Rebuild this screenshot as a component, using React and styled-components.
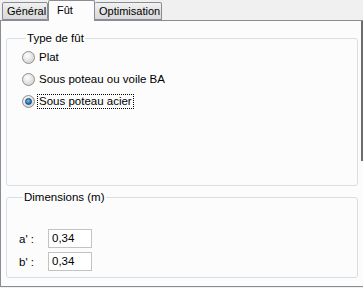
import styled, { createGlobalStyle } from "styled-components";

const GlobalStyle = createGlobalStyle`
  html, body { margin: 0; padding: 0; background: #f0f0f0; }
  body { font-family: "Liberation Sans", Arial, sans-serif; font-size: 11.5px; color: #000; }
`

const Window = styled.div`
  width: 363px;
  height: 288px;
  background: #f0f0f0;
  display: flex;
  flex-direction: column;
  position: relative;
  overflow: hidden;
  font-family: "Liberation Sans", Arial, sans-serif;
  font-size: 11.5px;
`

const TabStrip = styled.div`
  display: flex;
  align-items: flex-end;
  height: 20px;
  padding-left: 2px;
  position: relative;
  z-index: 1;
  font-size: 11px;
`

const Tab = styled.div`
  box-sizing: border-box;
  height: ${p => (p.$active ? "21px" : "18px")};
  margin-bottom: ${p => (p.$active ? "-1px" : "0")};
  padding-top: ${p => (p.$active ? "2px" : "1px")};
  padding-left: ${p => (p.$active ? "8px" : "4px")};
  width: ${p => p.$w}px;
  border: 1px solid #898c95;
  border-bottom: ${p => (p.$active ? "none" : "1px solid #898c95")};
  border-left: ${p => (p.$noLeft ? "none" : "1px solid #898c95")};
  border-radius: 2px 2px 0 0;
  background: ${p => (p.$active ? "#fcfcfc" : "linear-gradient(#f2f2f2, #e3e3e3 50%, #d9d9d9)")};
  line-height: 14px;
  white-space: nowrap;
`

const Panel = styled.div`
  flex: 1;
  box-sizing: border-box;
  background: #fcfcfc;
  border: 1px solid #898c95;
  border-right: none;
  padding: 10px 0 0 5px;
  display: flex;
  flex-direction: column;
  gap: 4px;
  margin-bottom: 1px;
`

const Group = styled.fieldset`
  box-sizing: border-box;
  margin: 0;
  width: 352px;
  height: ${p => p.$h}px;
  border: 1px solid #d5dfe5;
  border-radius: 3px;
  padding: 1px 0 0 ${p => p.$pl}px;
`

const Legend = styled.legend`
  padding: 0 1px;
  margin-left: 4px;
  line-height: 14px;
`

const RadioRow = styled.label`
  display: flex;
  align-items: center;
  height: 22px;
  gap: 3px;
`

const RadioDot = styled.span`
  box-sizing: border-box;
  width: 13px;
  height: 13px;
  border-radius: 50%;
  border: 1px solid #8e8f8f;
  background: radial-gradient(circle at 40% 35%, #ffffff 0%, #e6e6e6 45%, #c8c8c8 100%);
  display: flex;
  align-items: center;
  justify-content: center;
  &::after {
    content: "";
    display: ${p => (p.$checked ? "block" : "none")};
    width: 5px;
    height: 5px;
    border-radius: 50%;
    background: radial-gradient(circle at 40% 35%, #6fc3f5, #1b6fb5 70%, #0d3f75);
    border: 1px solid #1a3f6a;
  }
`

const RadioText = styled.span`
  padding: 0 1px;
  line-height: 13px;
  outline: ${p => (p.$focus ? "1px dotted #000" : "none")};
`

const Fields = styled.div`
  display: flex;
  flex-direction: column;
  gap: 4px;
  padding-top: 24px;
`

const FieldRow = styled.div`
  display: flex;
  align-items: center;
`

const FieldLabel = styled.span`
  width: 29px;
`

const Input = styled.div`
  box-sizing: border-box;
  width: 44px;
  height: 19px;
  border: 1px solid #c3c3c3;
  background: #fff;
  padding: 2px 0 0 3px;
  line-height: 13px;
`

const ScrollEdge = styled.div`
  position: absolute;
  right: 0;
  top: 21px;
  width: 2px;
  height: 140px;
  background: #6d6d6d;
`

const App = () => {
  const options = ["Plat", "Sous poteau ou voile BA", "Sous poteau acier"]
  const selected = 2
  return (
    <>
      <GlobalStyle />
      <Window>
        <TabStrip>
          <Tab $w={46}>Général</Tab>
          <Tab $w={47} $active>Fût</Tab>
          <Tab $w={67} $noLeft>Optimisation</Tab>
        </TabStrip>
        <Panel>
          <Group $h={155} $pl={15}>
            <Legend>Type de fût</Legend>
            {options.map((o, i) => (
              <RadioRow key={o}>
                <RadioDot $checked={i === selected} />
                <RadioText $focus={i === selected}>{o}</RadioText>
              </RadioRow>
            ))}
          </Group>
          <Group $h={88} $pl={12}>
            <Legend>Dimensions (m)</Legend>
            <Fields>
              <FieldRow>
                <FieldLabel>a' :</FieldLabel>
                <Input>0,34</Input>
              </FieldRow>
              <FieldRow>
                <FieldLabel>b' :</FieldLabel>
                <Input>0,34</Input>
              </FieldRow>
            </Fields>
          </Group>
        </Panel>
        <ScrollEdge />
      </Window>
    </>
  )
}

export default App
